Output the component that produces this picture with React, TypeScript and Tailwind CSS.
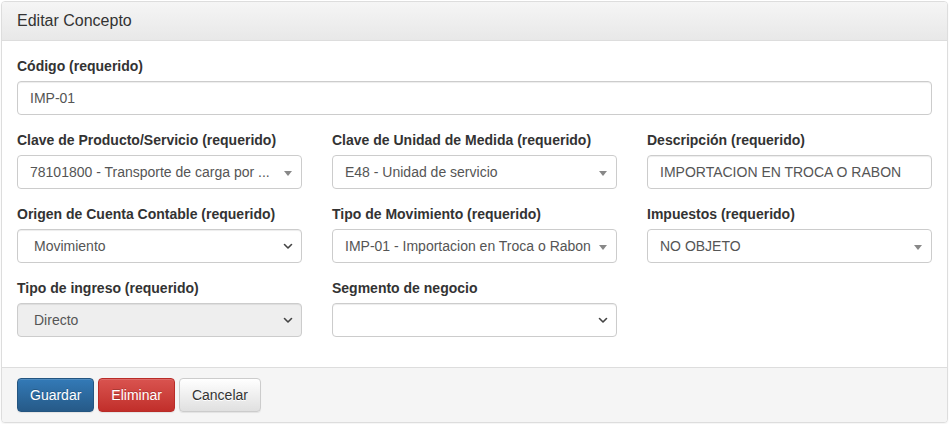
import type { ReactNode } from "react";

const FONT = { fontFamily: '"Liberation Sans", Arial, Helvetica, sans-serif' };

function Label({ children }: { children: ReactNode }) {
  return (
    <label className="mb-[5px] block text-[14px] font-bold leading-[20px] text-[#333]">
      {children}
    </label>
  );
}

function TextInput({ value }: { value: string }) {
  return (
    <input
      readOnly
      value={value}
      className="block h-[34px] w-full rounded-[4px] border border-[#ccc] bg-white px-[12px] text-[14px] text-[#555] shadow-[inset_0_1px_1px_rgba(0,0,0,0.075)] outline-none"
    />
  );
}

// select2-style combo with the small grey triangle
function Combo({ value }: { value: string }) {
  return (
    <div className="relative flex h-[34px] w-full items-center rounded-[4px] border border-[#ccc] bg-white pl-[12px] pr-[20px] text-[14px] text-[#555]">
      <span className="overflow-hidden whitespace-nowrap">{value}</span>
      <span className="absolute right-[9px] top-[15px] h-0 w-0 border-x-[4px] border-t-[5px] border-x-transparent border-t-[#888]" />
    </div>
  );
}

// native select with chevron
function NativeSelect({ value, disabled }: { value: string; disabled?: boolean }) {
  return (
    <div
      className={`relative flex h-[34px] w-full items-center rounded-[4px] border border-[#ccc] pl-[16px] pr-[30px] text-[14px] text-[#555] shadow-[inset_0_1px_1px_rgba(0,0,0,0.075)] ${
        disabled ? "bg-[#eee]" : "bg-white"
      }`}
    >
      <span className="whitespace-nowrap">{value}</span>
      <svg
        className="absolute right-[8px] top-[13px]"
        width="10"
        height="7"
        viewBox="0 0 10 7"
        fill="none"
      >
        <path d="M1.5 1.5l3.5 3.5 3.5-3.5" stroke="#444" strokeWidth="1.6" strokeLinecap="round" strokeLinejoin="round" />
      </svg>
    </div>
  );
}

function Field({ label, children }: { label: string; children: ReactNode }) {
  return (
    <div className="mb-[15px] px-[15px]">
      <Label>{label}</Label>
      {children}
    </div>
  );
}

export default function App() {
  return (
    <div className="bg-white p-px" style={FONT}>
      <div className="w-[947px] overflow-hidden rounded-[4px] border border-[#ddd] bg-white shadow-[0_1px_2px_rgba(0,0,0,0.05)]">
        <div className="border-b border-[#ddd] bg-gradient-to-b from-[#f5f5f5] to-[#e8e8e8] px-[15px] py-[9px] text-[16px] leading-[20px] text-[#333]">
          Editar Concepto
        </div>

        <div className="py-[15px]">
          <Field label="Código (requerido)">
            <TextInput value="IMP-01" />
          </Field>

          <div className="grid grid-cols-3">
            <Field label="Clave de Producto/Servicio (requerido)">
              <Combo value="78101800 - Transporte de carga por ..." />
            </Field>
            <Field label="Clave de Unidad de Medida (requerido)">
              <Combo value="E48 - Unidad de servicio" />
            </Field>
            <Field label="Descripción (requerido)">
              <TextInput value="IMPORTACION EN TROCA O RABON" />
            </Field>

            <Field label="Origen de Cuenta Contable (requerido)">
              <NativeSelect value="Movimiento" />
            </Field>
            <Field label="Tipo de Movimiento (requerido)">
              <Combo value="IMP-01 - Importacion en Troca o Rabon" />
            </Field>
            <Field label="Impuestos (requerido)">
              <Combo value="NO OBJETO" />
            </Field>

            <Field label="Tipo de ingreso (requerido)">
              <NativeSelect value="Directo" disabled />
            </Field>
            <Field label="Segmento de negocio">
              <NativeSelect value="" />
            </Field>
          </div>
        </div>

        <div className="flex gap-[4px] border-t border-[#ddd] bg-[#f5f5f5] px-[15px] py-[10px]">
          <button className="h-[34px] rounded-[4px] border border-[#245580] bg-gradient-to-b from-[#337ab7] to-[#265a88] px-[12px] text-[14px] text-white [text-shadow:0_-1px_0_rgba(0,0,0,0.2)] shadow-[inset_0_1px_0_rgba(255,255,255,0.15),0_1px_1px_rgba(0,0,0,0.075)]">
            Guardar
          </button>
          <button className="h-[34px] rounded-[4px] border border-[#b92c28] bg-gradient-to-b from-[#d9534f] to-[#c12e2a] px-[12px] text-[14px] text-white [text-shadow:0_-1px_0_rgba(0,0,0,0.2)] shadow-[inset_0_1px_0_rgba(255,255,255,0.15),0_1px_1px_rgba(0,0,0,0.075)]">
            Eliminar
          </button>
          <button className="h-[34px] rounded-[4px] border border-[#ccc] bg-gradient-to-b from-white to-[#e0e0e0] px-[12px] text-[14px] text-[#333] [text-shadow:0_1px_0_#fff] shadow-[inset_0_1px_0_rgba(255,255,255,0.15),0_1px_1px_rgba(0,0,0,0.075)]">
            Cancelar
          </button>
        </div>
      </div>
    </div>
  );
}
